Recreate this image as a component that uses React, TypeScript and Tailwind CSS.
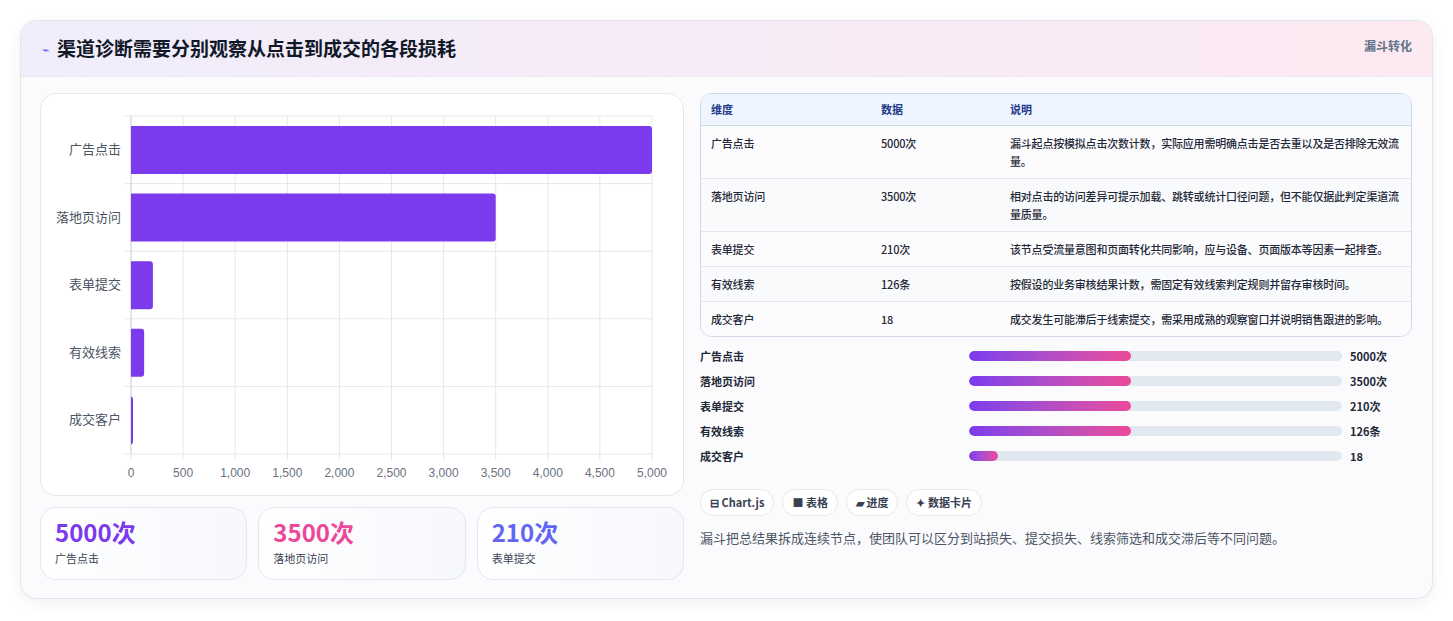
import React from "react";

const rows = [
  { k: "广告点击", v: "5000次", n: 5000, d: "漏斗起点按模拟点击次数计数，实际应用需明确点击是否去重以及是否排除无效流量。", pw: 162 },
  { k: "落地页访问", v: "3500次", n: 3500, d: "相对点击的访问差异可提示加载、跳转或统计口径问题，但不能仅据此判定渠道流量质量。", pw: 162 },
  { k: "表单提交", v: "210次", n: 210, d: "该节点受流量意图和页面转化共同影响，应与设备、页面版本等因素一起排查。", pw: 162 },
  { k: "有效线索", v: "126条", n: 126, d: "按假设的业务审核结果计数，需固定有效线索判定规则并留存审核时间。", pw: 162 },
  { k: "成交客户", v: "18", n: 18, d: "成交发生可能滞后于线索提交，需采用成熟的观察窗口并说明销售跟进的影响。", pw: 29 },
];

function Chart() {
  const x0 = 90, x1 = 611, top = 22, bottom = 360;
  const rh = (bottom - top) / 5;
  const ticks = [0, 500, 1000, 1500, 2000, 2500, 3000, 3500, 4000, 4500, 5000];
  return (
    <svg width="642" height="401" className="block">
      {ticks.map((t, i) => {
        const x = x0 + ((x1 - x0) * t) / 5000;
        return (
          <g key={i}>
            <line x1={x} y1={top} x2={x} y2={bottom + 6} stroke="#e5e7eb" />
            <text x={x} y={383} textAnchor="middle" fontSize="12" fill="#6b7280" fontFamily="Liberation Sans, sans-serif">{t.toLocaleString("en-US")}</text>
          </g>
        );
      })}
      {[0, 1, 2, 3, 4, 5].map((i) => (
        <line key={i} x1={x0 - 6} y1={top + rh * i} x2={x1} y2={top + rh * i} stroke="#e5e7eb" />
      ))}
      <line x1={x0} y1={top} x2={x0} y2={bottom} stroke="#d1d5db" />
      {rows.map((r, i) => {
        const y = top + rh * i + 10;
        const w = Math.max(2, ((x1 - x0) * r.n) / 5000);
        return (
          <g key={i}>
            <path d={`M${x0} ${y} H${x0 + w - 3} Q${x0 + w} ${y} ${x0 + w} ${y + 3} V${y + 45} Q${x0 + w} ${y + 48} ${x0 + w - 3} ${y + 48} H${x0} Z`} fill="#7c3aed" />
            <text x={x0 - 10} y={y + 28} textAnchor="end" fontSize="13" fill="#4b5563" fontFamily="Noto Sans CJK SC, sans-serif">{r.k}</text>
          </g>
        );
      })}
    </svg>
  );
}

export default function App() {
  return (
    <div className="w-[1453px] h-[621px] bg-white p-5" style={{ fontFamily: '"Noto Sans CJK SC", "Noto Sans", sans-serif' }}>
      <div className="rounded-2xl border border-[#e4e4f0] bg-[#fbfbfe] shadow-[0_4px_16px_rgba(0,0,0,0.06)] overflow-hidden h-[579px]">
        <div className="h-[56px] flex items-center justify-between pl-[21px] pr-5 bg-gradient-to-r from-[#f0edfb] to-[#fce9f1] border-b border-[#ece8f4]">
          <div className="flex items-center gap-[8px]">
            <span className="text-[12px] text-[#6366f1]">⌁</span>
            <span className="text-[19px] font-bold text-[#111827]">渠道诊断需要分别观察从点击到成交的各段损耗</span>
          </div>
          <span className="text-[12px] font-semibold text-[#64748b] self-start mt-4">漏斗转化</span>
        </div>
        <div className="flex gap-4 pl-[19px] pr-5 pt-4">
          <div className="w-[644px] flex flex-col gap-[11px]">
            <div className="rounded-2xl border border-[#e5e7eb] bg-white h-[403px] overflow-hidden"><Chart /></div>
            <div className="flex gap-[11px]">
              {[["5000次", "广告点击", "text-[#7c3aed]"], ["3500次", "落地页访问", "text-[#ec4899]"], ["210次", "表单提交", "text-[#6366f1]"]].map(([v, l, c]) => (
                <div key={l} className="flex-1 h-[73px] rounded-2xl border border-[#e2e8f0] bg-gradient-to-r from-white to-[#f6f8fc] px-[14px] pt-[8px]">
                  <div className={`text-[24px] font-bold leading-[32px] ${c}`}>{v}</div>
                  <div className="text-[11px] text-[#374151] mt-[2px]">{l}</div>
                </div>
              ))}
            </div>
          </div>
          <div className="w-[714px] flex flex-col">
            <div className="rounded-xl border border-[#cfd8e8] overflow-hidden bg-white">
              <div className="flex h-[32px] items-center bg-[#eef5fe] border-b border-[#cfd8e8] text-[11px] font-bold text-[#1e3a8a]">
                <div className="w-[180px] pl-[10px]">维度</div>
                <div className="w-[129px]">数据</div>
                <div className="flex-1">说明</div>
              </div>
              {rows.map((r, i) => (
                <div key={i} className={`flex pt-[8px] pb-[8px] text-[11px] leading-[18px] text-[#1f2937] font-medium tracking-[-0.2px] ${i < 4 ? "border-b border-[#e5e7eb]" : ""} ${i % 2 ? "bg-[#f8fafc]" : "bg-[#fcfcfe]"}`}>
                  <div className="w-[180px] pl-[10px] h-[18px] overflow-visible">{r.k}</div>
                  <div className="w-[129px]">{r.v}</div>
                  <div className="flex-1 pr-[8px] [&>p]:h-[18px]">{r.d}</div>
                </div>
              ))}
            </div>
            <div className="mt-[10px] flex flex-col gap-[7px]">
              {rows.map((r, i) => (
                <div key={i} className="flex items-center h-[18px] text-[11px] font-bold text-[#1f2937]">
                  <div className="w-[269px]">{r.k}</div>
                  <div className="w-[373px] h-[10px] rounded-full bg-[#e2e8f0] overflow-hidden">
                    <div className="h-full rounded-full bg-gradient-to-r from-[#7c3aed] to-[#ec4899]" style={{ width: r.pw }} />
                  </div>
                  <div className="ml-2">{r.v}</div>
                </div>
              ))}
            </div>
            <div className="flex gap-2 mt-[24px]">
              {["⊟ Chart.js", "■ 表格", "▰ 进度", "✦ 数据卡片"].map((t) => (
                <span key={t} className="h-[27px] px-[9px] flex items-center rounded-full border border-[#e5e7eb] bg-white text-[11px] font-bold text-[#374151]">{t}</span>
              ))}
            </div>
            <div className="mt-[12px] text-[13px] text-[#4b5563]">漏斗把总结果拆成连续节点，使团队可以区分到站损失、提交损失、线索筛选和成交滞后等不同问题。</div>
          </div>
        </div>
      </div>
    </div>
  );
}
